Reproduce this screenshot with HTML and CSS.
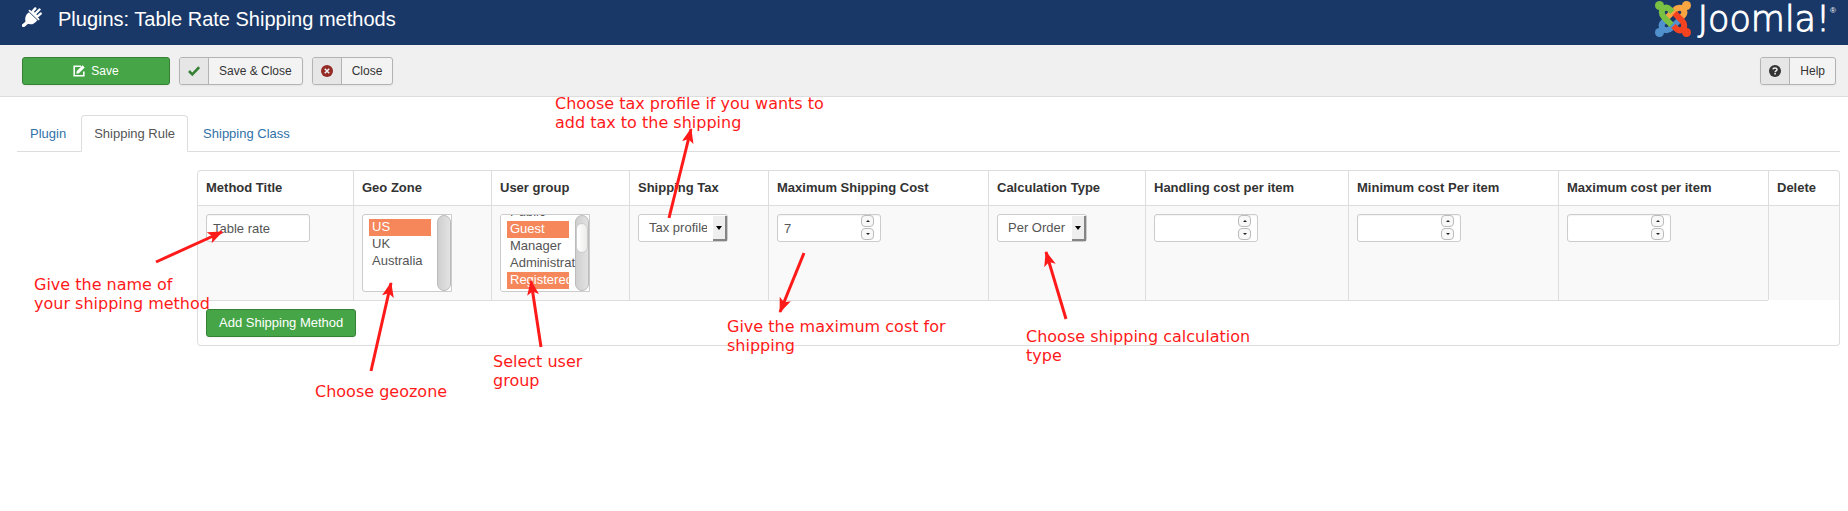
FILE: index.html
```html
<!DOCTYPE html>
<html lang="en">
<head>
<meta charset="utf-8">
<title>Plugins: Table Rate Shipping methods</title>
<link rel="stylesheet" href="styles.css">
</head>
<body>
<header class="header">
  <svg class="header-icon" viewBox="0 0 20 20" aria-hidden="true">
    <path d="M1.5 18.5 5 15.5" stroke="#fff" stroke-width="3.4" stroke-linecap="round"/>
    <path d="M7 5.2 15.3 13.2C12.5 17.4 8.2 18.4 5 16.3L3.9 15.2C2.2 11.8 3.6 7.6 7 5.2Z" fill="#fff"/>
    <path d="M7.5 3.7 16.6 12.4" stroke="#fff" stroke-width="1.8" stroke-linecap="round"/>
    <path d="M10.2 5 13.3 1.4M15 9.8 18.7 6.6M10.5 5 15 9.5M13 7 17.5 2.5" stroke="#fff" stroke-width="2.4" stroke-linecap="round"/>
  </svg>
  <h1 class="page-title">Plugins: Table Rate Shipping methods</h1>
  <div class="logo">
    <svg class="logo-mark" viewBox="0 0 36 36" aria-hidden="true">
      <defs>
        <g id="arm">
          <circle cx="4.5" cy="4.5" r="4.5" stroke="none"/>
          <path d="M17.5 11 14.8 8.3C11.5 5 6.8 7 6.8 11.5 6.8 14 7.8 15.2 9.3 16.7L16.5 23.9" fill="none" stroke-width="6"/>
        </g>
      </defs>
      <use href="#arm" fill="#5091cd" stroke="#5091cd" transform="rotate(270 18 18)"/>
      <use href="#arm" fill="#f9a541" stroke="#f9a541" transform="rotate(90 18 18)"/>
      <use href="#arm" fill="#f44321" stroke="#f44321" transform="rotate(180 18 18)"/>
      <use href="#arm" fill="#7ac143" stroke="#7ac143"/>
    </svg>
    <span class="logo-text">Joomla!</span><span class="logo-reg">®</span>
  </div>
</header>

<nav class="toolbar" aria-label="Toolbar">
  <button class="btn btn-success btn-save" type="button">
    <svg class="icon" viewBox="0 0 12 12" aria-hidden="true"><path d="M8 1.2H1.2V10.8H10.8V6.5" fill="none" stroke="#fff" stroke-width="1.6"/><path d="M3.3 8.7 3.8 6.1 9.6.3 11.7 2.4 5.9 8.2Z" fill="#fff"/></svg>
    Save
  </button>
  <button class="btn btn-split" type="button">
    <span class="btn-icon"><svg class="icon" viewBox="0 0 12 12" aria-hidden="true"><path d="M1 6 4.3 9.3 11.2 2.2" fill="none" stroke="#378137" stroke-width="2.6"/></svg></span>
    <span class="btn-label">Save &amp; Close</span>
  </button>
  <button class="btn btn-split" type="button">
    <span class="btn-icon"><svg class="icon" viewBox="0 0 12 12" aria-hidden="true"><circle cx="6" cy="6" r="6" fill="#942a25"/><path d="M3.8 3.8 8.2 8.2M8.2 3.8 3.8 8.2" stroke="#eee" stroke-width="1.6"/></svg></span>
    <span class="btn-label">Close</span>
  </button>
  <button class="btn btn-split btn-help" type="button">
    <span class="btn-icon"><svg class="icon" viewBox="0 0 12 12" aria-hidden="true"><circle cx="6" cy="6" r="6" fill="#333"/><path d="M3.9 4.4C4.1 2.4 8.1 2.4 8 4.6 7.9 5.9 6.1 5.8 6.1 7.2" fill="none" stroke="#eee" stroke-width="1.5"/><path d="M5.3 8H6.9V9.5H5.3Z" fill="#eee"/></svg></span>
    <span class="btn-label">Help</span>
  </button>
</nav>

<main class="content">
  <nav class="tabs" aria-label="Sections">
    <a class="tab" href="#plugin">Plugin</a>
    <a class="tab tab-active" href="#rule" aria-current="page">Shipping Rule</a>
    <a class="tab" href="#class">Shipping Class</a>
  </nav>

  <div class="rule-panel">
    <table class="rates">
      <colgroup>
        <col class="col-title"><col class="col-zone"><col class="col-zone"><col class="col-tax"><col class="col-max"><col class="col-calc"><col class="col-handling"><col class="col-cost"><col class="col-cost"><col>
      </colgroup>
      <thead>
        <tr>
          <th>Method Title</th>
          <th>Geo Zone</th>
          <th>User group</th>
          <th>Shipping Tax</th>
          <th>Maximum Shipping Cost</th>
          <th>Calculation Type</th>
          <th>Handling cost per item</th>
          <th>Minimum cost Per item</th>
          <th>Maximum cost per item</th>
          <th>Delete</th>
        </tr>
      </thead>
      <tbody>
        <tr>
          <td><input class="field" type="text" value="Table rate" aria-label="Method Title"></td>
          <td>
            <div class="list">
              <select class="list-box" multiple size="4" aria-label="Geo Zone">
                <option selected>US</option><option>UK</option><option>Australia</option>
              </select>
              <span class="track"></span>
            </div>
          </td>
          <td>
            <div class="list">
              <select class="list-box" id="groups" multiple size="4" aria-label="User group">
                <option>Public</option><option selected>Guest</option><option>Manager</option><option>Administrator</option><option selected>Registered</option><option>Author</option><option>Editor</option>
              </select>
              <span class="track"><span class="thumb"></span></span>
            </div>
          </td>
          <td>
            <div class="drop"><select class="drop-box" aria-label="Shipping Tax"><option>Tax profile</option></select><span class="drop-arrow"></span></div>
          </td>
          <td>
            <div class="number"><input class="field" type="number" value="7" aria-label="Maximum Shipping Cost"><span class="spin"><button class="spin-btn spin-up" type="button" aria-label="Increase"></button><button class="spin-btn spin-down" type="button" aria-label="Decrease"></button></span></div>
          </td>
          <td>
            <div class="drop"><select class="drop-box" aria-label="Calculation Type"><option>Per Order</option></select><span class="drop-arrow"></span></div>
          </td>
          <td>
            <div class="number"><input class="field" type="number" aria-label="Handling cost per item"><span class="spin"><button class="spin-btn spin-up" type="button" aria-label="Increase"></button><button class="spin-btn spin-down" type="button" aria-label="Decrease"></button></span></div>
          </td>
          <td>
            <div class="number"><input class="field" type="number" aria-label="Minimum cost per item"><span class="spin"><button class="spin-btn spin-up" type="button" aria-label="Increase"></button><button class="spin-btn spin-down" type="button" aria-label="Decrease"></button></span></div>
          </td>
          <td>
            <div class="number"><input class="field" type="number" aria-label="Maximum cost per item"><span class="spin"><button class="spin-btn spin-up" type="button" aria-label="Increase"></button><button class="spin-btn spin-down" type="button" aria-label="Decrease"></button></span></div>
          </td>
          <td></td>
        </tr>
      </tbody>
      <tfoot>
        <tr><td colspan="9"><button class="btn btn-success btn-add" type="button">Add Shipping Method</button></td></tr>
      </tfoot>
    </table>
  </div>
</main>

<svg class="arrows" width="1200" height="420" aria-hidden="true">
  <defs>
    <marker id="head" markerUnits="userSpaceOnUse" markerWidth="16" markerHeight="12" refX="14" refY="6" orient="auto">
      <path d="M0 0 15 6 0 12 3.5 6Z" fill="#ff1a1a"/>
    </marker>
  </defs>
  <g stroke="#ff1a1a" stroke-width="3" marker-end="url(#head)">
    <path d="M156 262 222 232"/>
    <path d="M371 371 391 283"/>
    <path d="M541 347 531 281"/>
    <path d="M669 218 691 129"/>
    <path d="M804 253 780 312"/>
    <path d="M1066 319 1046 252"/>
  </g>
</svg>
<p class="note note-tax">Choose tax profile if you wants to<br>add tax to the shipping</p>
<p class="note note-name">Give the name of<br>your shipping method</p>
<p class="note note-zone">Choose geozone</p>
<p class="note note-group">Select user<br>group</p>
<p class="note note-max">Give the maximum cost for<br>shipping</p>
<p class="note note-calc">Choose shipping calculation<br>type</p>
<script src="script.js"></script>
</body>
</html>
```

FILE: styles.css
```css
* { box-sizing: border-box; }

body {
  margin: 0;
  min-height: 100vh;
  background: #fff;
  color: #333;
  font: 13px/18px "Liberation Sans", Arial, sans-serif;
  position: relative;
}

button, input, select { font: inherit; margin: 0; }

.header {
  display: flex;
  align-items: flex-start;
  height: 45px;
  padding: 0 12px 0 22px;
  background: #1a3867;
  color: #fff;
}
.header-icon { width: 20px; height: 20px; margin-top: 7px; fill: none; }
.page-title { margin: 1px 0 0 16px; font-size: 20px; line-height: 36px; font-weight: 400; }
.logo { display: flex; margin-left: auto; align-items: flex-start; }
.logo-mark { width: 36px; height: 36px; margin: 1px 7px 0 0; }
.logo-text {
  font: 200 35px/38px "DejaVu Sans Light", "DejaVu Sans", sans-serif;
  -webkit-text-stroke: 1px #fff;
}
.logo-reg { font-size: 8px; line-height: 8px; margin-top: 7px; }

.toolbar {
  display: flex;
  gap: 9px;
  padding: 12px 12px 11px 22px;
  background: #f0f0f0;
  border-bottom: 1px solid #ddd;
  font-size: 12px;
}
.btn {
  display: inline-flex;
  align-items: center;
  justify-content: center;
  height: 28px;
  padding: 0 12px;
  border: 1px solid #b3b3b3;
  border-radius: 3px;
  background: #f3f3f3;
  color: #333;
  box-shadow: 0 1px 2px rgba(0, 0, 0, .05);
}
.btn-success { background: #46a546; border-color: #378137; color: #fff; }
.btn-save { width: 148px; gap: 6px; }
.btn-split { padding: 0; align-items: stretch; overflow: hidden; }
.btn-icon {
  display: flex;
  align-items: center;
  justify-content: center;
  width: 29px;
  background: #e6e6e6;
  border-right: 1px solid #b3b3b3;
}
.btn-label { padding: 0 10px; line-height: 27px; }
.btn-help { margin-left: auto; }
.icon { width: 12px; height: 12px; }

.content { padding: 18px 8px 0 17px; }

.tabs { display: flex; border-bottom: 1px solid #ddd; }
.tab {
  padding: 9px 12px 8px;
  margin-bottom: -1px;
  border: 1px solid transparent;
  border-radius: 4px 4px 0 0;
  line-height: 18px;
  color: #3071a9;
  text-decoration: none;
}
.tab + .tab { margin-left: 2px; }
.tab-active { color: #555; background: #fff; border-color: #ddd #ddd #fff; }

.rule-panel { padding: 18px 0 0 180px; }

.rates {
  width: 100%;
  table-layout: fixed;
  border: 1px solid #ddd;
  border-left: 0;
  border-radius: 4px;
  border-collapse: separate;
  border-spacing: 0;
}
.rates th, .rates td {
  padding: 8px;
  border-left: 1px solid #ddd;
  text-align: left;
  vertical-align: top;
  white-space: nowrap;
}
.rates th:first-child { border-top-left-radius: 4px; }
.rates tfoot td { border-bottom-left-radius: 4px; }
.rates tbody td, .rates tfoot td { border-top: 1px solid #ddd; }
.rates tbody td { background: #f9f9f9; }
.col-title { width: 156px; }
.col-zone { width: 138px; }
.col-tax { width: 139px; }
.col-max { width: 220px; }
.col-calc { width: 157px; }
.col-handling { width: 203px; }
.col-cost { width: 210px; }

.field {
  display: block;
  width: 104px;
  height: 28px;
  padding: 4px 6px;
  border: 1px solid #ccc;
  border-radius: 3px;
  background: #fff;
  color: #555;
  box-shadow: inset 0 1px 1px rgba(0, 0, 0, .05);
  appearance: textfield;
}
.field::-webkit-inner-spin-button { display: none; }

.number { position: relative; width: 104px; }
.spin {
  position: absolute;
  top: 1px;
  right: 7px;
  display: grid;
  gap: 1px;
}
.spin-btn {
  display: grid;
  place-items: center;
  width: 13px;
  height: 12px;
  padding: 0;
  border: 1px solid #bbb;
  border-radius: 4px;
  background: #f8f8f8;
}
.spin-btn::before { content: ""; border: 2px solid transparent; }
.spin-up::before { border-top: 0; border-bottom-color: #222; }
.spin-down::before { border-bottom: 0; border-top-color: #222; }

.list { position: relative; width: 90px; }
.list-box {
  display: block;
  width: 90px;
  height: 78px;
  padding: 4px 20px 4px 6px;
  border: 1px solid #ccc;
  border-radius: 3px 0 0 3px;
  background: #fff;
  color: #555;
  outline: 0;
  scrollbar-width: none;
}
.list-box option { height: 17px; min-height: 17px; padding: 0 3px; line-height: 17px; }
.list-box option:checked {
  overflow: hidden;
  background: linear-gradient(#f5875b, #f5875b);
  color: #fff;
}
.track {
  position: absolute;
  top: 1px;
  right: 1px;
  bottom: 1px;
  width: 14px;
  border: 1px solid #bbb;
  border-radius: 7px;
  background: linear-gradient(90deg, #cfcfcf, #e2e2e2);
}
.thumb {
  position: absolute;
  top: 7px;
  left: 0;
  right: 0;
  height: 30px;
  border: 1px solid #ccc;
  border-radius: 6px;
  background: linear-gradient(90deg, #fff, #ececea);
}

.drop { position: relative; width: 90px; }
.drop-box {
  display: block;
  width: 90px;
  height: 28px;
  padding: 4px 20px 4px 10px;
  border: 1px solid #ccc;
  border-radius: 3px;
  background: #fff;
  color: #555;
  appearance: none;
}
.drop-arrow {
  position: absolute;
  top: 2px;
  right: 1px;
  display: grid;
  place-items: center;
  width: 14px;
  height: 25px;
  border-right: 2px solid #858585;
  border-bottom: 2px solid #858585;
  background: #efefef;
  pointer-events: none;
}
.drop-arrow::before { content: ""; border: 3px solid transparent; border-bottom: 0; border-top: 4px solid #000; }

.arrows { position: absolute; top: 0; left: 0; fill: none; pointer-events: none; }
.note {
  position: absolute;
  margin: 0;
  color: #ff1a1a;
  font: 16px/19px "DejaVu Sans", sans-serif;
  white-space: nowrap;
}
.note-tax { left: 555px; top: 94px; }
.note-name { left: 34px; top: 275px; }
.note-zone { left: 315px; top: 382px; }
.note-group { left: 493px; top: 352px; }
.note-max { left: 727px; top: 317px; }
.note-calc { left: 1026px; top: 327px; }
```

FILE: script.js
```js
// Start the user group list part-way down its first entry.
const groups = document.getElementById('groups');
const place = () => { groups.scrollTop = 15; };
place();
window.addEventListener('load', place);
```
